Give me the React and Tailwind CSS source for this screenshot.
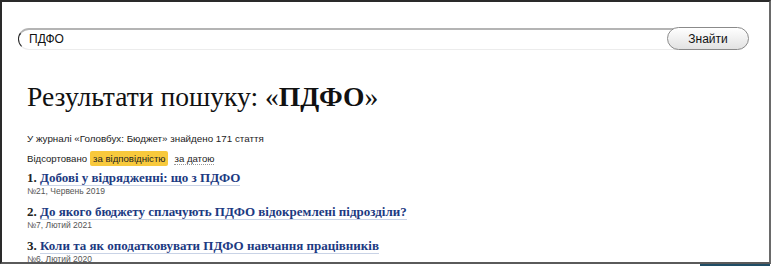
import React from 'react';

const results = [
  { title: 'Добові у відрядженні: що з ПДФО', meta: '№21, Червень 2019' },
  { title: 'До якого бюджету сплачують ПДФО відокремлені підрозділи?', meta: '№7, Лютий 2021' },
  { title: 'Коли та як оподатковувати ПДФО навчання працівників', meta: '№6, Лютий 2020' },
];

const serif = { fontFamily: '"Liberation Serif", Georgia, serif' };

export default function App() {
  return (
    <div className="w-[773px] h-[266px] bg-white overflow-hidden" style={{ fontFamily: '"Liberation Sans", Arial, sans-serif' }}>
      <div className="w-[771px] h-[264px] border-2 border-t-[#2a2a2a] border-l-[#2a2a2a] border-r-[#6a6a6a] border-b-[#5a5a5a] overflow-hidden">
        {/* Search bar */}
        <div className="flex items-center mt-[25px] ml-[16px] mr-[20px]">
          <div className="flex-1 h-[22px] flex items-center rounded-l-full border-l-[1.5px] border-t-2 border-l-[#222] border-t-[#b4b4b4] border-b border-b-[#ececec] pl-[10px] -mr-[10px]">
            <span className="text-[12px] text-[#111]">ПДФО</span>
          </div>
          <button className="w-[82px] h-[23px] rounded-full border border-[#8a8a8a] bg-gradient-to-b from-white to-[#e2e2e2] text-[12px] text-[#111] shadow-[inset_0_1px_0_#fff]">
            Знайти
          </button>
        </div>

        <div className="pl-[25px]">
          <h1 className="mt-[31px] text-[27.6px] leading-[32px] text-[#111]" style={serif}>
            Результати пошуку: «<b>ПДФО</b>»
          </h1>

          <p className="mt-[20px] text-[9.8px] leading-[12px] text-[#222]">
            У журналі «Головбух: Бюджет» знайдено 171 стаття
          </p>

          <div className="mt-[6px] h-[15px] flex items-center text-[9.6px] leading-[12px] text-[#222]">
            <span>Відсортовано</span>
            <span className="ml-[3px] h-[15px] flex items-center bg-[#f8c93c] rounded-[2px] px-[3px]">за відповідністю</span>
            <span className="ml-[6px] border-b border-dotted border-[#999] leading-[11px]">за датою</span>
          </div>

          <div className="mt-[4px] flex flex-col gap-[8px]">
            {results.map((r, i) => (
              <div key={i}>
                <div className="text-[13px] leading-[16px] font-bold whitespace-nowrap" style={serif}>
                  <span className="text-[#222]">{i + 1}. </span>
                  <span className="text-[#1c3a82] border-b border-[#c9d3e6]">{r.title}</span>
                </div>
                <div className="text-[8.5px] leading-[10px] text-[#555]">{r.meta}</div>
              </div>
            ))}
          </div>
        </div>
      </div>
      <div className="ml-[700px] w-[70px] h-[2px] bg-[#1f4d66]" />
    </div>
  );
}
